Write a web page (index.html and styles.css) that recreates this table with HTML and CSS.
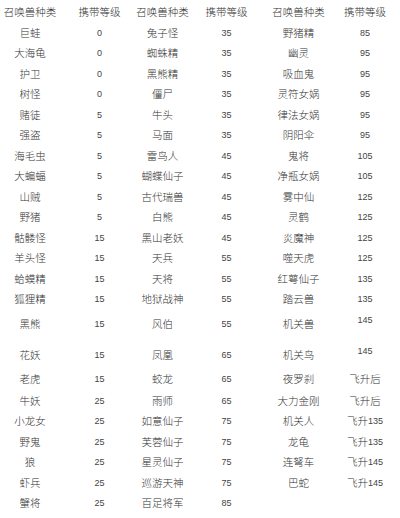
FILE: index.html
```html
<!DOCTYPE html>
<html lang="zh">
<head>
<meta charset="utf-8">
<link rel="stylesheet" href="styles.css">
</head>
<body>
<div class="tbl">
  <div class="c">召唤兽种类</div><div class="c">携带等级</div><div class="c">召唤兽种类</div><div class="c">携带等级</div><div class="c">召唤兽种类</div><div class="c">携带等级</div>

  <div class="c">巨蛙</div><div class="c n">0</div><div class="c">兔子怪</div><div class="c n">35</div><div class="c">野猪精</div><div class="c n">85</div>
  <div class="c">大海龟</div><div class="c n">0</div><div class="c">蜘蛛精</div><div class="c n">35</div><div class="c">幽灵</div><div class="c n">95</div>
  <div class="c">护卫</div><div class="c n">0</div><div class="c">黑熊精</div><div class="c n">35</div><div class="c">吸血鬼</div><div class="c n">95</div>
  <div class="c">树怪</div><div class="c n">0</div><div class="c">僵尸</div><div class="c n">35</div><div class="c">灵符女娲</div><div class="c n">95</div>
  <div class="c">赌徒</div><div class="c n">5</div><div class="c">牛头</div><div class="c n">35</div><div class="c">律法女娲</div><div class="c n">95</div>
  <div class="c">强盗</div><div class="c n">5</div><div class="c">马面</div><div class="c n">35</div><div class="c">阴阳伞</div><div class="c n">95</div>
  <div class="c">海毛虫</div><div class="c n">5</div><div class="c">雷鸟人</div><div class="c n">45</div><div class="c">鬼将</div><div class="c n">105</div>
  <div class="c">大蝙蝠</div><div class="c n">5</div><div class="c">蝴蝶仙子</div><div class="c n">45</div><div class="c">净瓶女娲</div><div class="c n">105</div>
  <div class="c">山贼</div><div class="c n">5</div><div class="c">古代瑞兽</div><div class="c n">45</div><div class="c">雾中仙</div><div class="c n">125</div>
  <div class="c">野猪</div><div class="c n">5</div><div class="c">白熊</div><div class="c n">45</div><div class="c">灵鹤</div><div class="c n">125</div>
  <div class="c">骷髅怪</div><div class="c n">15</div><div class="c">黑山老妖</div><div class="c n">45</div><div class="c">炎魔神</div><div class="c n">125</div>
  <div class="c">羊头怪</div><div class="c n">15</div><div class="c">天兵</div><div class="c n">55</div><div class="c">噬天虎</div><div class="c n">125</div>
  <div class="c">蛤蟆精</div><div class="c n">15</div><div class="c">天将</div><div class="c n">55</div><div class="c">红萼仙子</div><div class="c n">135</div>
  <div class="c">狐狸精</div><div class="c n">15</div><div class="c">地狱战神</div><div class="c n">55</div><div class="c">踏云兽</div><div class="c n">135</div>
  <div class="c">黑熊</div><div class="c n">15</div><div class="c">风伯</div><div class="c n">55</div><div class="c">机关兽</div><div class="c n up">145</div>
  <div class="c">花妖</div><div class="c n">15</div><div class="c">凤凰</div><div class="c n">65</div><div class="c">机关鸟</div><div class="c n up">145</div>
  <div class="c">老虎</div><div class="c n">15</div><div class="c">蛟龙</div><div class="c n">65</div><div class="c">夜罗刹</div><div class="c">飞升后</div>
  <div class="c">牛妖</div><div class="c n">25</div><div class="c">雨师</div><div class="c n">65</div><div class="c">大力金刚</div><div class="c">飞升后</div>
  <div class="c">小龙女</div><div class="c n">25</div><div class="c">如意仙子</div><div class="c n">75</div><div class="c">机关人</div><div class="c">飞升<span class="d">135</span></div>
  <div class="c">野鬼</div><div class="c n">25</div><div class="c">芙蓉仙子</div><div class="c n">75</div><div class="c">龙龟</div><div class="c">飞升<span class="d">135</span></div>
  <div class="c">狼</div><div class="c n">25</div><div class="c">星灵仙子</div><div class="c n">75</div><div class="c">连弩车</div><div class="c">飞升<span class="d">145</span></div>
  <div class="c">虾兵</div><div class="c n">25</div><div class="c">巡游天神</div><div class="c n">75</div><div class="c">巴蛇</div><div class="c">飞升<span class="d">145</span></div>
  <div class="c">蟹将</div><div class="c n">25</div><div class="c">百足将军</div><div class="c n">85</div><div class="c"></div><div class="c"></div>
</div>
</body>
</html>
```
FILE: styles.css
```css
html, body {
  margin: 0;
  padding: 0;
  background: #ffffff;
}
body {
  padding-top: 2px;
  font-family: "Noto Sans CJK SC", "Liberation Sans", sans-serif;
  font-size: 10.5px;
  font-weight: 300;
  color: #333333;
}
.tbl {
  display: grid;
  grid-template-columns: 60px 79px 47px 81px 63px 70px;
  grid-template-rows: repeat(14, 20.5px) 25px 31px 24px 21.5px repeat(6, 20.5px);
  width: 400px;
}
.c {
  display: flex;
  justify-content: center;
  align-items: flex-start;
  height: 20px;
  line-height: 20px;
  white-space: nowrap;
}
.n {
  font-family: "Liberation Sans", Arial, sans-serif;
  font-size: 9px;
  font-weight: 400;
  color: #444444;
  line-height: 21px;
}
.up {
  line-height: 13px;
}
.d {
  font-family: "Liberation Sans", Arial, sans-serif;
  font-size: 9px;
  font-weight: 400;
  color: #444444;
}
```
